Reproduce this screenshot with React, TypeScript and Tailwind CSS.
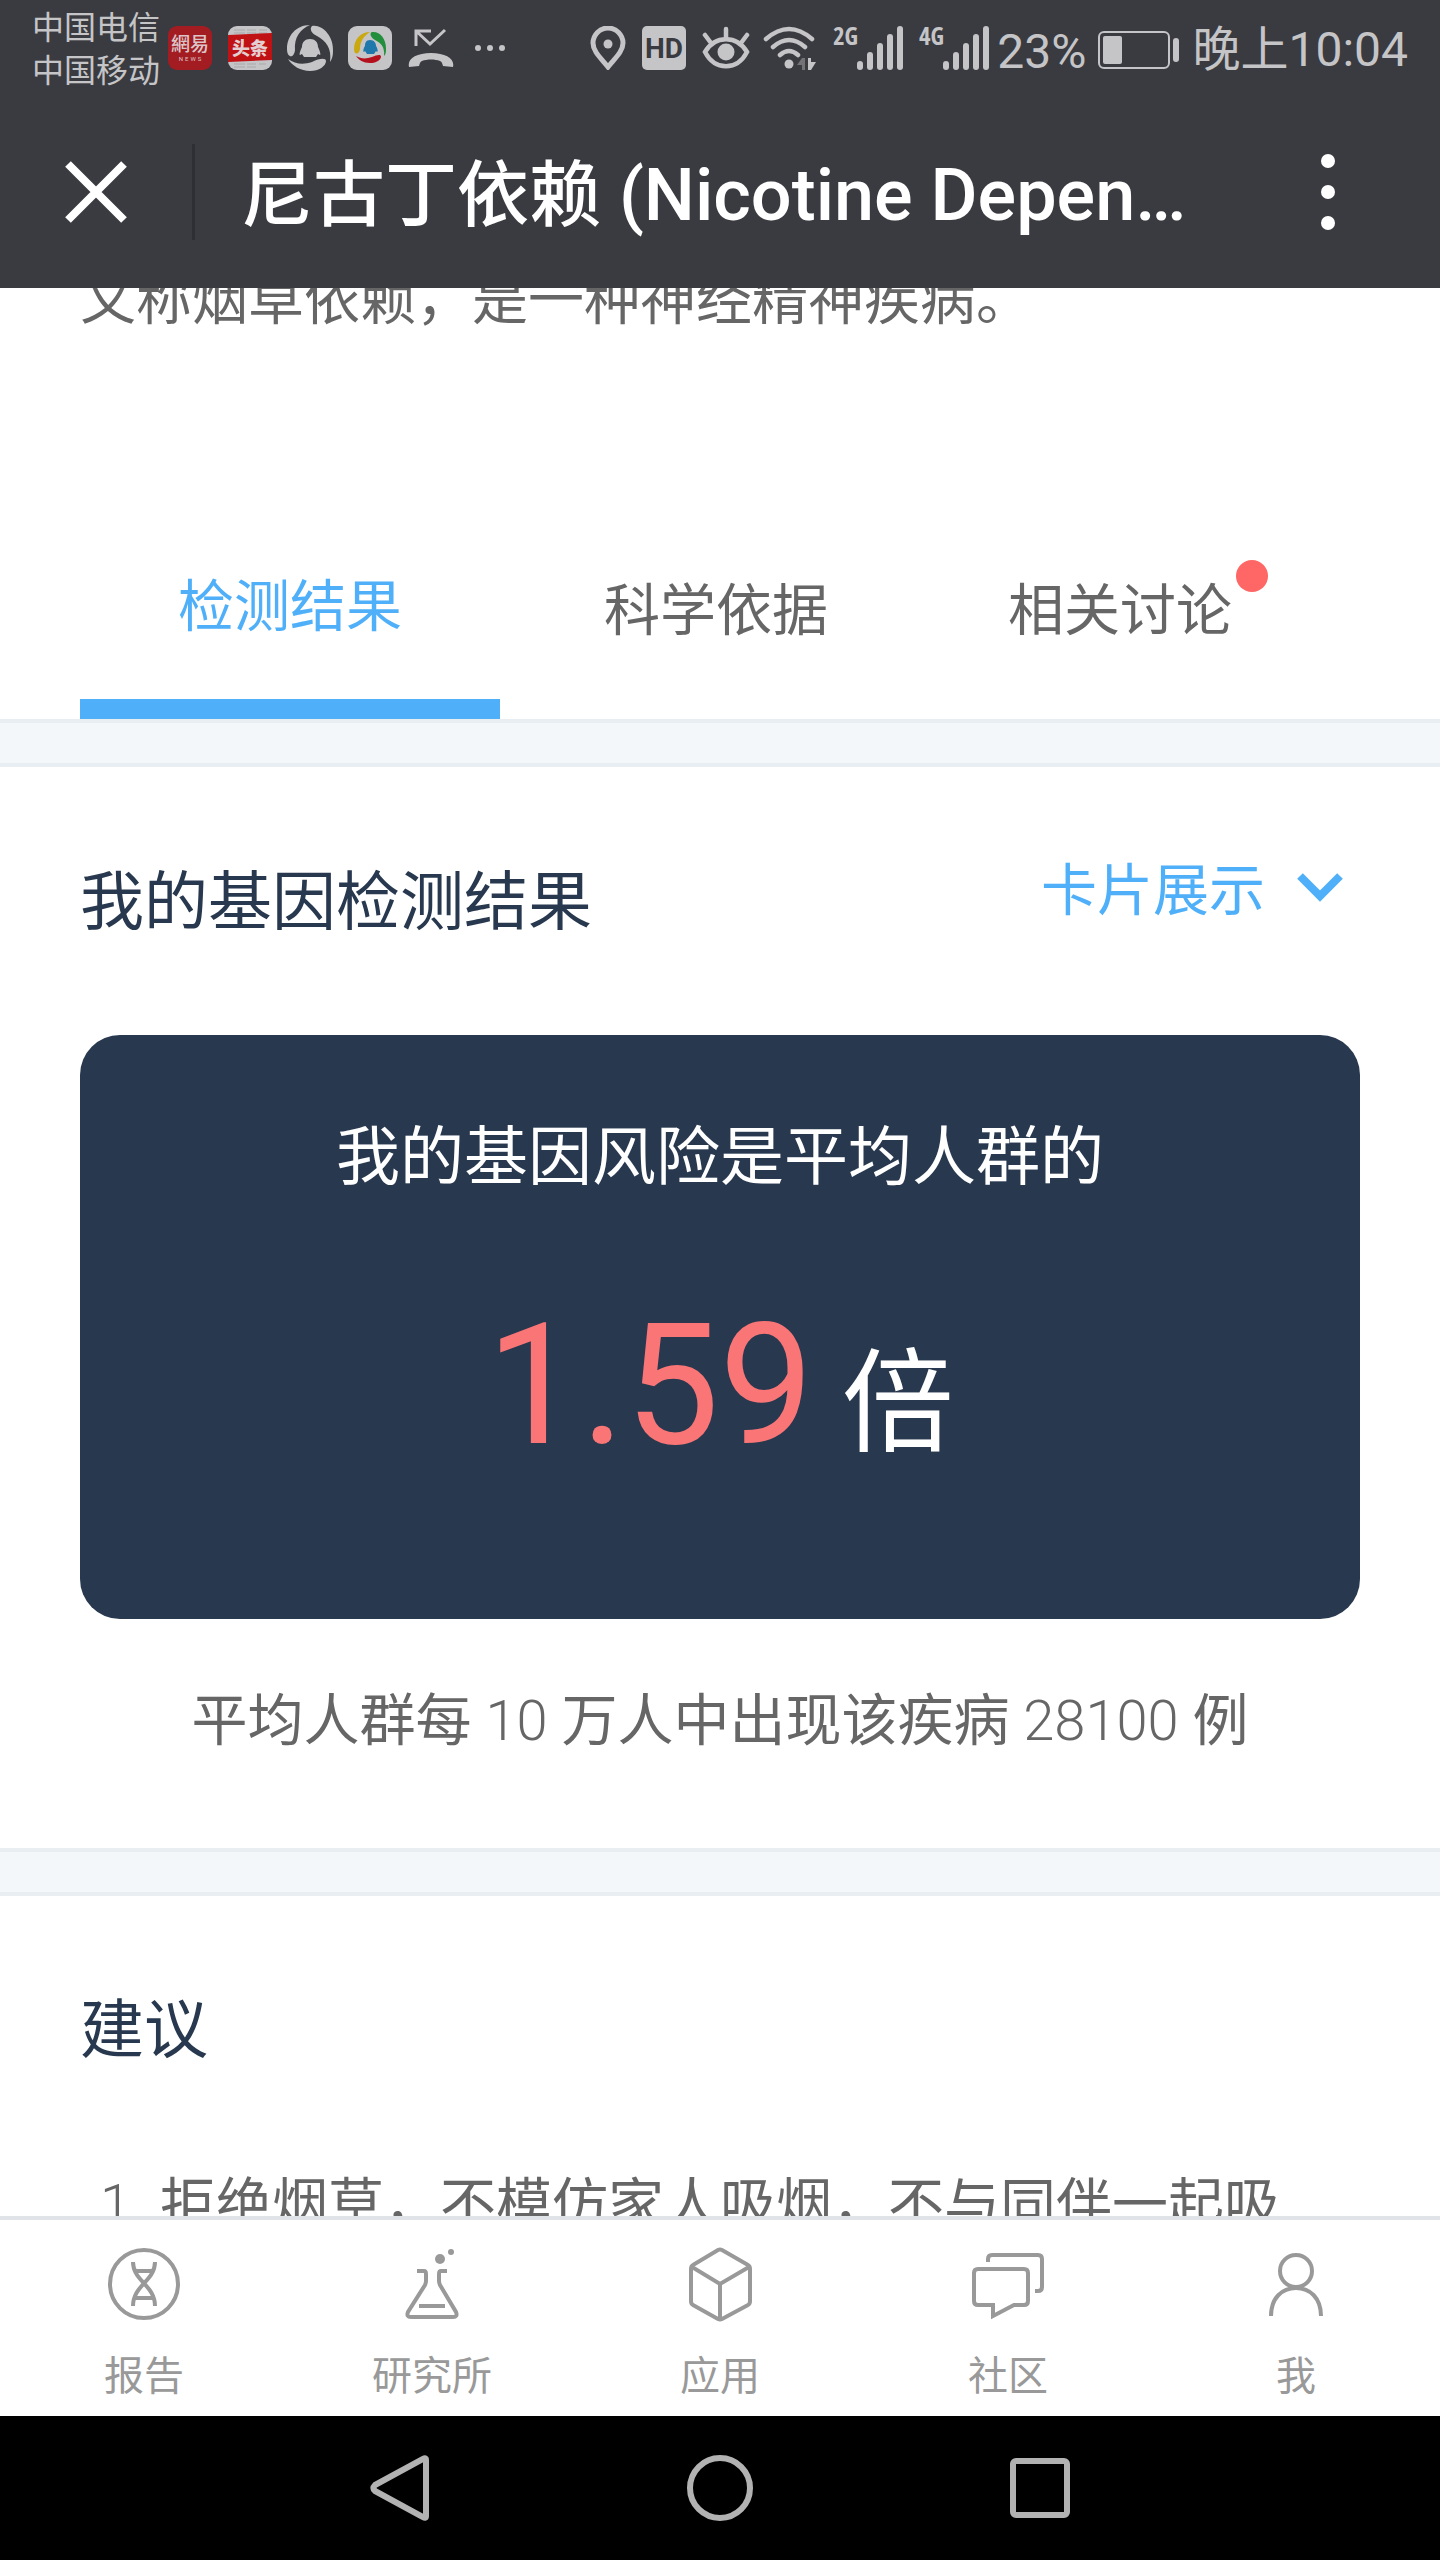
import type { ReactNode } from "react";

function StatusBar() {
  return (
    <div className="flex h-24 items-center justify-between pl-8 pr-8 text-[#c5c5c8] fill-current">
      <div className="flex items-center">
        <div className="w-32 pt-1 text-[32px] leading-[43px] whitespace-nowrap">
          <p>中国电信</p>
          <p>中国移动</p>
        </div>

        <svg className="ml-2 size-11" viewBox="0 0 44 44">
          <rect width="44" height="44" rx="9" fill="#a31c21" />
          <text x="22" y="25" textAnchor="middle" fontSize="19" fontWeight="500" fill="#dcc5c8">網易</text>
          <text x="23" y="35" textAnchor="middle" fontSize="6" letterSpacing="2" fill="#dcc5c8">NEWS</text>
        </svg>

        <svg className="ml-4 size-11" viewBox="0 0 44 44">
          <rect width="44" height="44" rx="9" />
          <path d="M6 4h11M6 7h11M19 4h9M19 7h9M31 4h8M31 7h8M6 38h11M6 41h11M19 38h9M19 41h9M31 38h7" stroke="#a9a9ac" strokeWidth="1" />
          <path d="M0 9L44 7v27L0 36z" fill="#c01214" />
          <text x="22" y="29" textAnchor="middle" fontSize="18" fontWeight="900" fill="#e3cfd1">头条</text>
        </svg>

        <svg className="ml-[14px] size-12" viewBox="0 0 48 48">
          <path d="M24 1C10 1 1 12 1 25c0 9 7 10 8 1C8 14 14 5 24 1z" />
          <path d="M26 2c10-2 22 10 21 25 0 5-1 8-3 11C46 24 40 17 31 12c-5-2-8-7-5-10z" />
          <path d="M2 35c7 5 15 6 24 3 8-4 14-4 14-1 0 5-7 10-16 10S6 42 2 35z" />
          <path d="M24 15c-5 0-8 3-8 8-2 4-3 8-2 8l2-1 2 3h12l2-3 2 1c1 0 0-4-2-8 0-5-3-8-8-8z" />
        </svg>

        <svg className="ml-[14px] size-11" viewBox="0 0 44 44">
          <rect width="44" height="44" rx="9" />
          <path d="M22 6C13 6 6 13 6 23c0 6 5 6 6 0 0-8 4-13 10-17z" fill="#c9a90f" />
          <path d="M24 6c8-1 14 7 14 16 0 4 0 6-2 8 1-9-3-13-9-16-4-2-6-7-3-8z" fill="#238f3c" />
          <path d="M8 30c5 3 10 3 16 1 5-2 9-3 9 0-1 4-6 6-11 6-7 0-11-3-14-7z" fill="#b4101d" />
          <path d="M22 14c-4 0-5 3-5 6-2 3-2 6-1 6l1-1 2 3h7l2-3 1 1c1 0 1-3-1-6 0-3-2-6-6-6z" fill="#1f78ab" />
        </svg>

        <svg className="ml-4 h-11 w-[46px]" viewBox="0 0 46 44">
          <path d="M8 20V5h15M8 5l14 13L37 4" fill="none" stroke="currentColor" strokeWidth="3" />
          <path d="M1 41c-2-8 7-14 22-14s24 6 22 14l-10-1c-1-3-1-4-3-5-5-2-13-2-18 0-2 1-2 2-3 5z" />
        </svg>

        <svg className="ml-5 h-2 w-8" viewBox="0 0 32 8">
          <circle cx="4" cy="4" r="3" />
          <circle cx="16" cy="4" r="3" />
          <circle cx="28" cy="4" r="3" />
        </svg>
      </div>

      <div className="flex items-center">
        <svg className="h-11 w-9" viewBox="0 0 36 44">
          <path d="M18 41C12 33 3 26 3 17a15 15 0 0 1 30 0C33 26 24 33 18 41z" fill="none" stroke="currentColor" strokeWidth="5" />
          <circle cx="18" cy="18" r="4.5" />
        </svg>

        <svg className="ml-4 size-11" viewBox="0 0 44 44">
          <rect width="44" height="44" rx="5" />
          <text x="22" y="32" textAnchor="middle" fontSize="28" fontWeight="700" fill="#3a3b40">HD</text>
        </svg>

        <svg className="ml-4 h-11 w-12" viewBox="0 0 48 44">
          <g fill="none" stroke="currentColor" strokeWidth="4.5" strokeLinecap="round">
            <path d="M24 3v9M3 9l6 8M45 9l-6 8" />
            <path d="M3 26c10-17 32-17 42 0-10 19-32 19-42 0z" />
          </g>
          <circle cx="24" cy="26" r="8.5" />
        </svg>

        <svg className="ml-[13px] h-11 w-[54px]" viewBox="0 0 54 44">
          <g fill="none" stroke="currentColor" strokeWidth="4.5" strokeLinecap="round">
            <path d="M3 13q23-20 46 0M10 21q16-14 32 0M17 29q9-8 18 0" />
          </g>
          <circle cx="26" cy="38" r="4.5" />
          <path d="M34 39l5-7h3v12h-3v-5z" fill="#737377" />
          <path d="M45 32h3v4h5l-5 8h-3z" />
        </svg>

        <Signal label="2G" />
        <Signal label="4G" />

        <span className="mt-2 ml-2 text-[48px] leading-[56px]">23%</span>

        <svg className="ml-3 h-11 w-[82px]" viewBox="0 0 82 44">
          <rect x="1" y="6" width="70" height="36" rx="5" fill="none" stroke="currentColor" strokeWidth="2" />
          <rect x="5" y="10" width="19" height="28" rx="2" />
          <rect x="75" y="12" width="6" height="24" rx="3" />
        </svg>

        <span className="mt-1 ml-3 text-[48px] leading-[56px]">晚上10:04</span>
      </div>
    </div>
  );
}

function Signal({ label }: { label: string }) {
  return (
    <svg className="ml-4 h-11 w-[70px] overflow-visible" viewBox="0 0 70 44">
      <text x="0" y="19" fontSize="25" fontWeight="700" fontFamily="'Open Sans Condensed', 'DejaVu Sans Condensed', Roboto">
        {label}
      </text>
      <rect x="24" y="35" width="6" height="9" rx="3" />
      <rect x="34" y="26" width="6" height="18" rx="3" />
      <rect x="44" y="17" width="6" height="27" rx="3" />
      <rect x="54" y="8" width="6" height="36" rx="3" />
      <rect x="64" y="0" width="6" height="44" rx="3" />
    </svg>
  );
}

function TitleBar() {
  return (
    <div className="flex h-48 items-center pl-16 pr-20">
      <button type="button" aria-label="关闭">
        <svg className="size-16" viewBox="0 0 64 64" stroke="#fff" strokeWidth="8">
          <path d="M4 4l56 56M60 4L4 60" />
        </svg>
      </button>
      <div className="ml-16 h-24 w-[3px] bg-[#2e2f33]" />
      <h1 className="ml-[46px] flex-1 truncate pt-2 text-[72px] leading-[96px] font-medium text-white">
        尼古丁依赖 (Nicotine Depen…
      </h1>
      <button type="button" aria-label="更多" className="flex w-16 flex-col items-center gap-[17px]">
        <span className="size-[14px] rounded-full bg-white" />
        <span className="size-[14px] rounded-full bg-white" />
        <span className="size-[14px] rounded-full bg-white" />
      </button>
    </div>
  );
}

function Divider() {
  return <div className="h-12 border-y-4 border-[#e9eef2] bg-[#f3f7fa]" />;
}

function NavItem({ label, children }: { label: string; children: ReactNode }) {
  return (
    <a href="#" className="flex flex-1 flex-col items-center">
      <svg className="size-20" viewBox="0 0 80 80" fill="none" stroke="#999" strokeWidth="4">
        {children}
      </svg>
      <span className="mt-[29px] text-[40px] leading-[48px]">{label}</span>
    </a>
  );
}

export default function App() {
  return (
    <div className="flex h-screen flex-col bg-white font-[Roboto,'Noto_Sans_CJK_SC',sans-serif] text-[#666]">
      <header className="bg-[#3a3b40]">
        <StatusBar />
        <TitleBar />
      </header>

      <main className="min-h-0 flex-1 overflow-hidden">
        <p className="-mt-7 px-20 text-[56px] leading-[80px]">
          又称烟草依赖，是一种神经精神疾病。
        </p>

        <div className="mt-[227px] grid grid-cols-[420fr_432fr_376fr_52fr] items-end px-20 text-[56px] leading-[80px]">
          <button type="button" className="border-b-[20px] border-[#4fb0f9] pb-[52px] text-[#4fb0f9]">
            检测结果
          </button>
          <button type="button" className="pb-[68px]">科学依据</button>
          <button type="button" className="pb-[68px]">
            <span className="relative">
              相关讨论
              <span className="absolute -top-[18px] -right-9 size-8 rounded-full bg-[#ff6666]" />
            </span>
          </button>
        </div>

        <Divider />

        <section className="px-20 pt-[84px] pb-[87px]">
          <div className="flex items-start justify-between">
            <h2 className="mt-3 text-[64px] leading-[80px] text-[#27384f]">我的基因检测结果</h2>
            <label className="mr-[17px] flex items-center gap-8 text-[56px] leading-[80px] text-[#4fb0f9]">
              <select aria-label="展示方式" className="h-20 appearance-none">
                <option>卡片展示</option>
              </select>
              <svg className="mb-2 h-[30px] w-[46px]" viewBox="0 0 46 30" fill="none" stroke="currentColor" strokeWidth="8">
                <path d="M3 4l20 20L43 4" />
              </svg>
            </label>
          </div>

          <div className="mt-[92px] rounded-[40px] bg-[#28384f] pt-[83px] pb-[134px] text-center text-white">
            <p className="text-[64px] leading-[80px]">我的基因风险是平均人群的</p>
            <p className="mt-[108px] flex items-baseline justify-center gap-7 text-[112px] leading-[160px]">
              <span className="text-[168px] text-[#fa7576]">1.59</span>
              <span>倍</span>
            </p>
          </div>

          <p className="mt-[62px] text-center text-[56px] leading-[80px]">
            平均人群每 <span className="font-light">10</span> 万人中出现该疾病 <span className="font-light">28100</span> 例
          </p>
        </section>

        <Divider />

        <section className="px-20 pt-[95px]">
          <h2 className="text-[64px] leading-[80px] text-[#27384f]">建议</h2>
          <ol className="mt-[94px] text-[56px] leading-[80px]">
            <li className="flex">
              <span className="w-20 pl-5 font-light">1.</span>
              <span className="flex-1">拒绝烟草，不模仿家人吸烟，不与同伴一起吸</span>
            </li>
          </ol>
        </section>
      </main>

      <nav className="flex border-t-4 border-[#e0e3e7] bg-white pt-6 pb-[15px] text-[#999]">
        <NavItem label="报告">
          <circle cx="40" cy="40" r="34" />
          <path d="M29 18c0 19 22 23 22 44M51 18c0 19-22 23-22 44M31 27h18M31 54h18" />
        </NavItem>
        <NavItem label="研究所">
          <path d="M25 27h7q2 0 2 3v7q0 2-1 4L16 68q-2 5 3 5h42q5 0 3-5L48 41q-1-2-1-4v-7q0-3 2-3h6M27 62h26" />
          <circle cx="48" cy="15" r="5" fill="#999" stroke="none" />
          <circle cx="59" cy="8" r="3" fill="#999" stroke="none" />
        </NavItem>
        <NavItem label="应用">
          <path d="M38 6q2-1 4 0l26 15q2 1 2 4v32q0 3-2 4L42 75q-2 1-4 0L13 61q-2-1-2-4V25q0-3 2-4zM12 23l28 17 29-17M40 40v35" />
        </NavItem>
        <NavItem label="社区">
          <path d="M10 25h46q4 0 4 4v28q0 4-4 4H46L25 72V61H10q-4 0-4-4V29q0-4 4-4zM20 18v-3q0-4 4-4h46q4 0 4 4v28q0 4-4 4h-3" />
        </NavItem>
        <NavItem label="我">
          <circle cx="40" cy="27" r="16" />
          <path d="M15 72C15 54 26 44 40 44s25 10 25 28" />
        </NavItem>
      </nav>

      <div className="flex h-36 items-center bg-black px-60">
        <button type="button" aria-label="返回" className="flex flex-1 justify-center">
          <svg className="h-[66px] w-[60px]" viewBox="0 0 60 66" fill="none" stroke="#b2b2b2" strokeWidth="6">
            <path d="M56 5v56q0 3-3 1L5 36q-3-3 0-6L53 4q3-2 3 1z" />
          </svg>
        </button>
        <button type="button" aria-label="主页" className="flex flex-1 justify-center">
          <span className="size-[66px] rounded-full border-[6px] border-[#b2b2b2]" />
        </button>
        <button type="button" aria-label="最近任务" className="flex flex-1 justify-center">
          <span className="size-[60px] rounded-md border-[6px] border-[#b2b2b2]" />
        </button>
      </div>
    </div>
  );
}
